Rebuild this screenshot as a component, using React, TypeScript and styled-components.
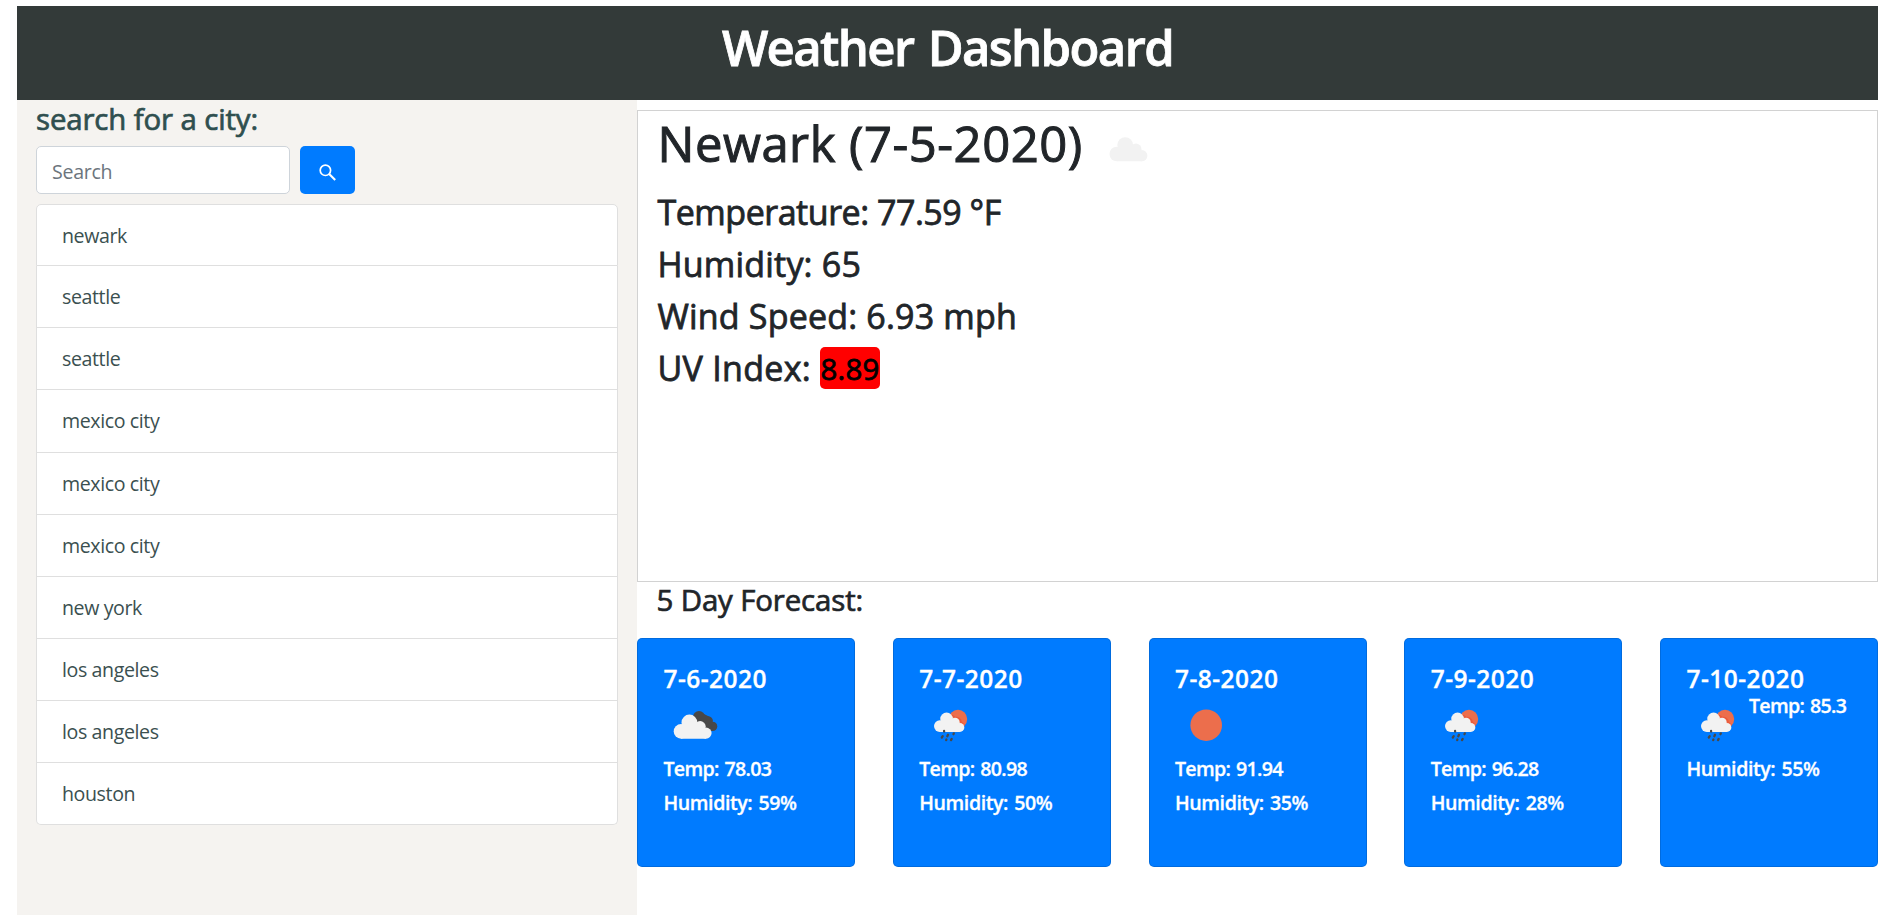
import React from 'react';
import styled, { createGlobalStyle } from 'styled-components';

const GlobalStyle = createGlobalStyle`
  *, *::before, *::after { box-sizing: border-box; }
  html, body { margin: 0; background: #fff; overflow: hidden; }
  body {
    color: #212529;
    font-family: "Open Sans", "Noto Sans", sans-serif;
    font-size: 19.6px;
    line-height: 30px;
  }
  h1, h2, h3, h4, p, ul { margin: 0; padding: 0; font-weight: 400; }
`;

const Page = styled.div`
  display: flex;
  flex-direction: column;
  height: 100vh;
  padding: 6px 19px 0 17px;
`;

const Header = styled.header`
  flex: none;
  height: 94px;
  padding-top: 11px;
  background: #333a39;
  color: #fff;
  text-align: center;
`;

const Title = styled.h1`
  && { font-weight: 600; }
  font-size: 49px;
  line-height: 60px;
  letter-spacing: -1.6px;
  word-spacing: 3px;
  -webkit-text-stroke: 0.8px currentColor;
`;

const Body = styled.div`
  display: grid;
  grid-template-columns: 620px 1fr;
  flex: 1;
  min-height: 0;
`;

const Sidebar = styled.aside`
  padding: 1px 19px 0;
  background: #f5f3f0;
  color: #2f4f4f;
`;

const SidebarTitle = styled.h3`
  margin-bottom: 9px;
  font-size: 29.4px;
  line-height: 36px;
  letter-spacing: -0.12px;
  -webkit-text-stroke: 0.7px currentColor;
`;

const SearchForm = styled.form`
  display: flex;
  gap: 10px;
  height: 48px;
  margin-bottom: 10px;
`;

const SearchInput = styled.input`
  width: 254px;
  padding: 3px 15px 0 15px;
  border: 1px solid #ced4da;
  border-radius: 5px;
  background: #fff;
  color: #495057;
  font: inherit;
  letter-spacing: -0.3px;
  &::placeholder { color: #6c757d; opacity: 1; }
`;

const SearchButton = styled.button`
  display: flex;
  align-items: center;
  justify-content: center;
  width: 55px;
  padding: 5px 0 0;
  border: 0;
  border-radius: 5px;
  background: #007bff;
  color: #fff;
`;

const CityList = styled.ul`
  list-style: none;
`;

const CityItem = styled.li`
  display: flex;
  align-items: center;
  height: 62.15px;
  padding: 1px 24px 0 25px;
  border: 1px solid #dfdfdf;
  border-top-width: 0;
  background: #fff;
  color: #3b5050;
  letter-spacing: -0.4px;
  &:first-child { border-top-width: 1px; border-radius: 5px 5px 0 0; }
  &:last-child { border-radius: 0 0 5px 5px; }
`;

const Main = styled.main`
  padding-top: 10px;
`;

const CurrentPanel = styled.section`
  height: 472px;
  padding: 2px 18px 2px 19.5px;
  border: 1px solid #d2d2d2;
`;

const CurrentHeading = styled.div`
  display: flex;
  height: 60px;
  margin-bottom: 18px;
`;

const CityName = styled.h2`
  width: 441.5px;
  font-size: 49px;
  line-height: 60px;
  letter-spacing: 0.5px;
  -webkit-text-stroke: 1px currentColor;
`;

const Reading = styled.h3<{ $tracking: number }>`
  display: flex;
  height: 42px;
  margin-bottom: 10px;
  font-size: 34px;
  line-height: 42px;
  letter-spacing: ${(p) => p.$tracking}px;
  white-space: pre;
  -webkit-text-stroke: 0.8px currentColor;
`;

const UvBadge = styled.span`
  width: 60px;
  margin-left: 9px;
  padding-top: 3px;
  border-radius: 5px;
  background: red;
  color: #000;
  font-size: 29.4px;
  line-height: 39px;
  text-align: center;
`;

const ForecastTitle = styled.h3`
  margin: 0 0 20px 19.5px;
  font-size: 29.4px;
  line-height: 36px;
  letter-spacing: -0.12px;
  -webkit-text-stroke: 0.7px currentColor;
`;

const Forecast = styled.section`
  display: flex;
  justify-content: space-between;
`;

const Card = styled.article`
  width: 218px;
  height: 229px;
  padding: 25px 0 0 25px;
  border: 1px solid rgba(0, 0, 0, 0.125);
  border-radius: 5px;
  background: #007bff;
  color: #fff;
`;

const CardDate = styled.h4`
  && { font-weight: 600; }
  padding-left: 0.5px;
  font-size: 24.5px;
  line-height: 30px;
  letter-spacing: 0.45px;
  -webkit-text-stroke: 0.3px currentColor;
`;

const IconRow = styled.div`
  display: flex;
  height: 63px;
`;

const CardLine = styled.p<{ $tight?: boolean }>`
  && { font-weight: 600; }
  margin-bottom: 10px;
  padding-left: 0.5px;
  line-height: 24px;
  letter-spacing: ${(p) => (p.$tight ? -0.7 : -0.42)}px;
  word-spacing: 1.5px;
  -webkit-text-stroke: 0.3px currentColor;
`;

const IconBox = styled.svg`
  flex: none;
  display: block;
`;

function CloudShape() {
  return (
    <g fill="#f2f2f2">
      <circle cx="7.3" cy="16.8" r="7.3" />
      <circle cx="15.7" cy="7.9" r="7.9" />
      <circle cx="26.4" cy="12" r="5.6" />
      <circle cx="32.3" cy="18.5" r="5.6" />
      <path d="M7.3 24.1V12L15.7 7 26 9l6.3 9v6.1Z" />
    </g>
  );
}

function WeatherIcon({ kind }: { kind: string }) {
  return (
    <IconBox width="62.5" height="62.5" viewBox="0 0 62.5 62.5" aria-hidden>
      {kind === 'sun' && <circle cx="31.2" cy="31.2" r="15.8" fill="#ec6e4c" />}
      {kind === 'clouds' && (
        <>
          <g fill="#484848">
            <circle cx="36" cy="23" r="6" />
            <circle cx="45.6" cy="26.8" r="4.3" />
            <circle cx="49.6" cy="32.4" r="4.7" />
            <path d="M33 27l4-9 10 5 2.6 14.1h-4L36 30Z" />
          </g>
          <g transform="translate(10.7 20.6)"><CloudShape /></g>
        </>
      )}
      {kind === 'rain' && (
        <>
          <circle cx="39" cy="25" r="9.2" fill="#ec6e4c" />
          <path d="M33 21.5a5 5 0 0 1 3 2.2 4.8 4.8 0 0 1 6 4.3l3.5 3.5" fill="none" stroke="#ea5a3c" strokeWidth="1.6" />
          <g transform="translate(15 18.6) scale(.8)"><CloudShape /></g>
          <g stroke="#484848" strokeWidth="2.3" strokeLinecap="round">
            <path d="M25.1 37v.5M29 40.8l-.7 1.4M34.8 39.4l-.3.8M23.7 42.2l-.9 1.3M27.4 45.5l-.2.6M32.7 44.9l-.7 1.2" />
          </g>
        </>
      )}
      {kind === 'cloud' && <g transform="translate(10.5 24.2)"><CloudShape /></g>}
    </IconBox>
  );
}

function SearchIcon() {
  return (
    <svg width="18" height="18" viewBox="0 0 18 18" fill="none" stroke="currentColor" aria-hidden>
      <circle cx="6.4" cy="6.3" r="5.2" strokeWidth="1.7" />
      <path d="M10.2 10.1l6 6" strokeWidth="2.1" />
    </svg>
  );
}

const cities = [
  'newark', 'seattle', 'seattle', 'mexico city', 'mexico city',
  'mexico city', 'new york', 'los angeles', 'los angeles', 'houston',
];

const readings = [
  { text: 'Temperature: 77.59 °F', tracking: -0.48 },
  { text: 'Humidity: 65', tracking: 0.2 },
  { text: 'Wind Speed: 6.93 mph', tracking: 0.18 },
];

const days = [
  { date: '7-6-2020', icon: 'clouds', temp: '78.03', humidity: 59 },
  { date: '7-7-2020', icon: 'rain', temp: '80.98', humidity: 50 },
  { date: '7-8-2020', icon: 'sun', temp: '91.94', humidity: 35 },
  { date: '7-9-2020', icon: 'rain', temp: '96.28', humidity: 28 },
  { date: '7-10-2020', icon: 'rain', temp: '85.3', humidity: 55, beside: true },
];

export default function App() {
  return (
    <>
      <GlobalStyle />
      <Page>
        <Header>
          <Title>Weather Dashboard</Title>
        </Header>
        <Body>
          <Sidebar>
            <SidebarTitle>search for a city:</SidebarTitle>
            <SearchForm onSubmit={(e) => e.preventDefault()}>
              <SearchInput placeholder="Search" />
              <SearchButton aria-label="Search">
                <SearchIcon />
              </SearchButton>
            </SearchForm>
            <CityList>
              {cities.map((city, i) => (
                <CityItem key={i}>{city}</CityItem>
              ))}
            </CityList>
          </Sidebar>
          <Main>
            <CurrentPanel>
              <CurrentHeading>
                <CityName>Newark (7-5-2020)</CityName>
                <WeatherIcon kind="cloud" />
              </CurrentHeading>
              {readings.map((r) => (
                <Reading key={r.text} $tracking={r.tracking}>{r.text}</Reading>
              ))}
              <Reading $tracking={0.3}>
                UV Index:<UvBadge>8.89</UvBadge>
              </Reading>
            </CurrentPanel>
            <ForecastTitle>5 Day Forecast:</ForecastTitle>
            <Forecast>
              {days.map((d) => {
                const temp = <CardLine $tight>Temp: {d.temp}</CardLine>;
                return (
                  <Card key={d.date}>
                    <CardDate>{d.date}</CardDate>
                    <IconRow>
                      <WeatherIcon kind={d.icon} />
                      {d.beside && temp}
                    </IconRow>
                    {!d.beside && temp}
                    <CardLine>Humidity: {d.humidity}%</CardLine>
                  </Card>
                );
              })}
            </Forecast>
          </Main>
        </Body>
      </Page>
    </>
  );
}
